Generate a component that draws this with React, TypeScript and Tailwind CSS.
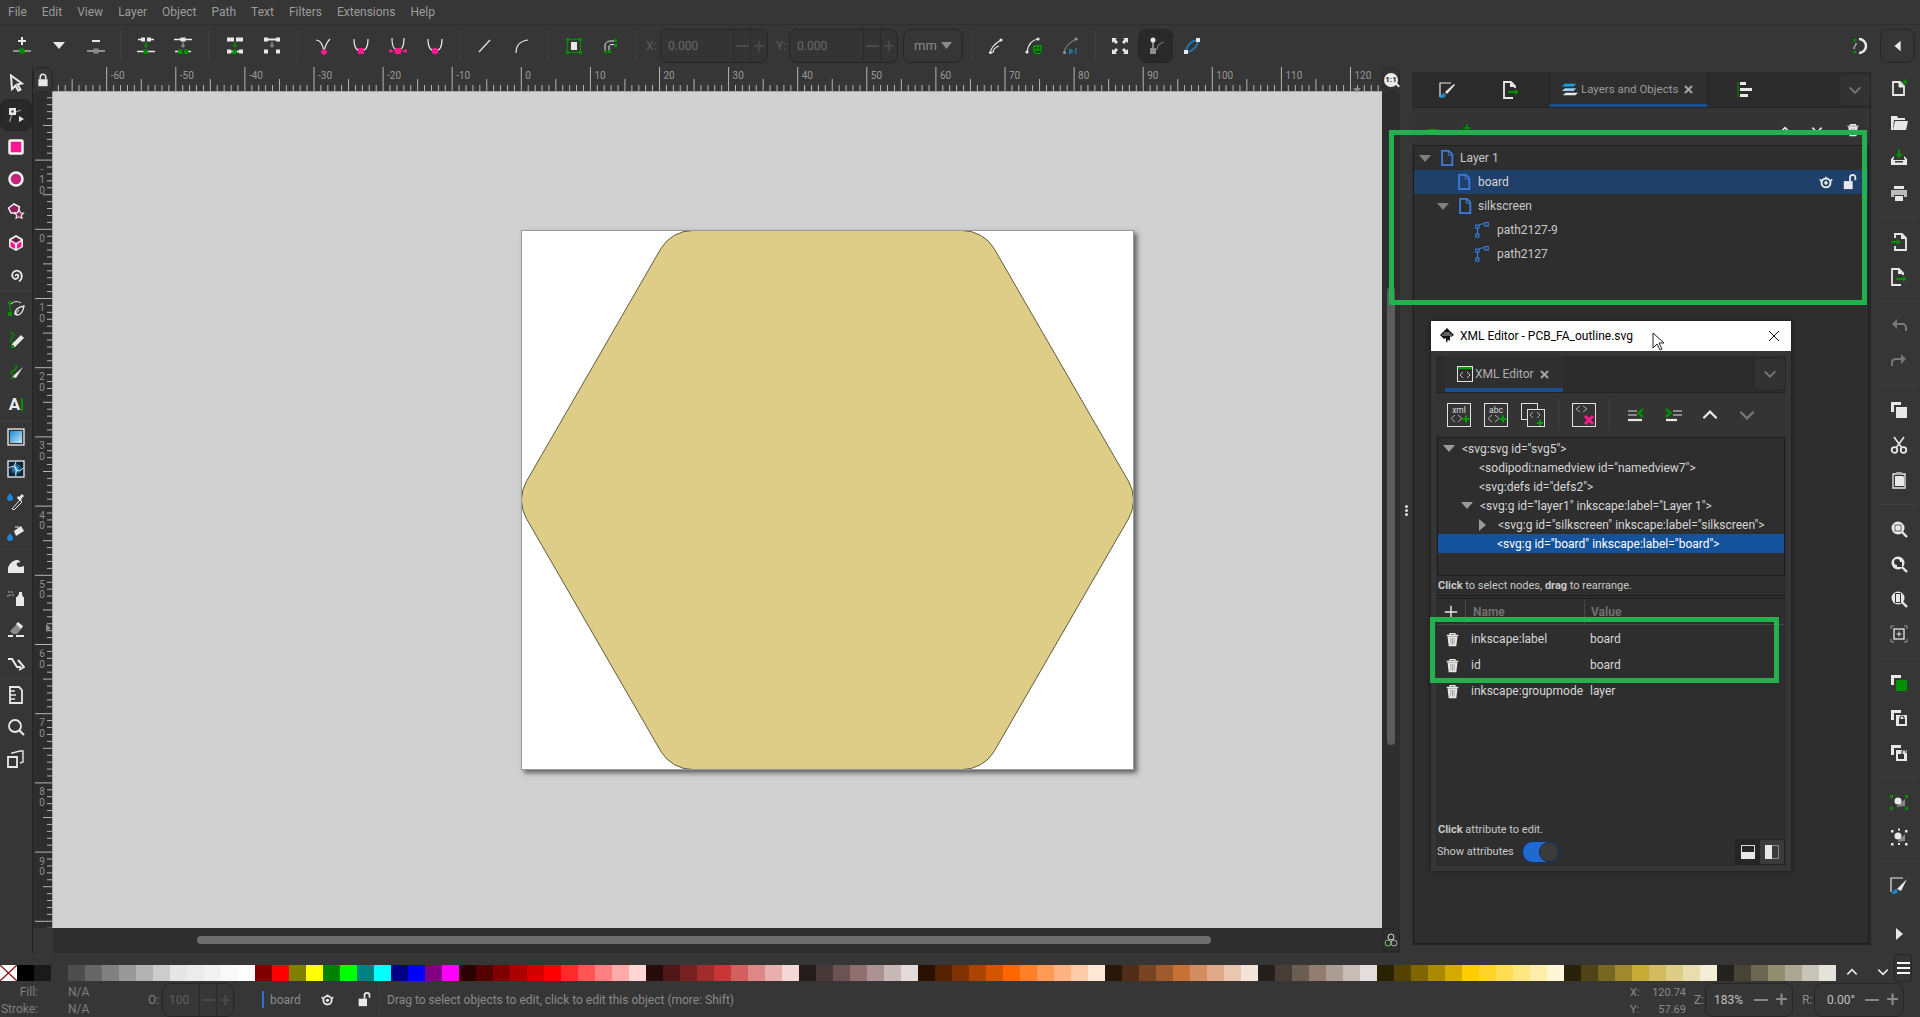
import React from 'react';

const W = '#e8e8e8';
const Gy = '#8a8a8a';
const G = '#008f00';
const P = '#ff1a8c';
const B = '#3b7de0';

// every icon lives on an 18x18 grid
const icons: Record<string, React.ReactNode> = {
  addNode: <><path d="M9 0v8M5 4h8" stroke={W} strokeWidth="2" /><path d="M0 14h18" stroke={W} /><rect x="6.5" y="11.5" width="5" height="5" fill={G} /></>,
  tri: <path d="M3 5h12l-6 7z" fill={W} />,
  delNode: <><path d="M5 4h8" stroke={W} strokeWidth="2" /><path d="M0 14h18" stroke={W} /><rect x="6.5" y="11.5" width="5" height="5" fill={Gy} /></>,
  join: <><path d="M1 2.5h5M12 2.5h5M0 14.5h18" stroke={W} strokeWidth="1.4" /><rect x="4" y="0.5" width="4" height="4" fill={W} /><rect x="10" y="0.5" width="4" height="4" fill={W} /><path d="M9 5v3" stroke={G} strokeWidth="1.5" /><path d="M6.5 8h5L9 11z" fill={G} /><rect x="6.5" y="12.5" width="4.5" height="4.5" fill={G} /></>,
  breakN: <><path d="M0 2.5h18M1 14.5h4M13 14.5h4" stroke={W} strokeWidth="1.4" /><rect x="6.5" y="0.5" width="5" height="4" fill={W} /><path d="M9 5v3" stroke={Gy} strokeWidth="1.5" /><path d="M6.5 8h5L9 11z" fill={Gy} /><rect x="4" y="12.5" width="4.5" height="4.5" fill={G} /><rect x="10" y="12.5" width="4.5" height="4.5" fill={G} /></>,
  joinSeg: <><rect x="1" y="0.5" width="7" height="4" fill={W} /><rect x="10" y="0.5" width="7" height="4" fill={W} /><path d="M9 5v3" stroke={G} strokeWidth="1.5" /><path d="M6.5 8h5L9 11z" fill={G} /><path d="M1 14.5h16" stroke={W} strokeWidth="2" /><rect x="6.5" y="12.5" width="4.5" height="4.5" fill={G} /><rect x="1" y="12.5" width="4" height="4" fill={W} /><rect x="13" y="12.5" width="4" height="4" fill={W} /></>,
  delSeg: <><rect x="1" y="0.5" width="4" height="4" fill={W} /><rect x="13" y="0.5" width="4" height="4" fill={W} /><path d="M3 2.5h12" stroke={W} strokeWidth="2" /><path d="M9 5v3" stroke={Gy} strokeWidth="1.5" /><path d="M6.5 8h5L9 11z" fill={Gy} /><rect x="1" y="12.5" width="4" height="4" fill={W} /><rect x="13" y="12.5" width="4" height="4" fill={W} /></>,
  cusp: <><path d="M1 3c5 0 7 5 8 12 1-6 3-10 6-13" stroke={W} strokeWidth="1.2" fill="none" /><rect x="6.5" y="12.5" width="5" height="5" transform="rotate(45 9 15)" fill={P} /></>,
  smooth: <><path d="M2 2c0 9 3 12 7 12s7-3 7-12" stroke={W} strokeWidth="1.2" fill="none" /><rect x="6" y="11" width="6" height="6" fill={P} /></>,
  symm: <><path d="M3 1c0 9 2 12 6 12s6-3 6-12" stroke={W} strokeWidth="1.2" fill="none" /><path d="M1 14h16" stroke={P} strokeWidth="1" /><rect x="6" y="11" width="6" height="6" fill={P} /><rect x="0" y="12.5" width="3" height="3" fill={P} /><rect x="15" y="12.5" width="3" height="3" fill={P} /></>,
  auto: <><path d="M2 2c0 9 3 12 7 12s7-3 7-12" stroke={W} strokeWidth="1.2" fill="none" /><circle cx="9" cy="14" r="3.2" fill={P} /></>,
  line: <path d="M3 15L14 3" stroke={W} strokeWidth="1.2" />,
  curve: <path d="M3 16C3 9 7 4 15 3" stroke={W} strokeWidth="1.2" fill="none" />,
  objPath: <><rect x="2.5" y="2.5" width="13" height="13" stroke={G} strokeWidth="1.2" fill="none" /><rect x="1" y="1" width="3" height="3" fill={G} /><rect x="14" y="1" width="3" height="3" fill={G} /><rect x="1" y="14" width="3" height="3" fill={G} /><rect x="14" y="14" width="3" height="3" fill={G} /><rect x="6" y="5" width="6" height="8" fill={W} /></>,
  strokePath: <><path d="M3 14V9c0-3 2-5 6-5h5M7 14V9.500c0-1 1-2 3-2h4" stroke={W} fill="none" /><rect x="12" y="2" width="3" height="3" fill={G} /><rect x="12" y="7" width="3" height="3" fill={G} /><rect x="2" y="13" width="3" height="3" fill={G} /><rect x="6" y="13" width="3" height="3" fill={G} /></>,
  flip1: <><path d="M2 16C3 10 8 6 13 3M5 16c0-4 3-6 6-7" stroke={W} strokeWidth="1.2" fill="none" /><circle cx="13" cy="3" r="1.6" fill={W} /><circle cx="2.500" cy="15.500" r="1.6" fill={W} /></>,
  flip2: <><path d="M2 15C3 8 7 3 13 2" stroke={W} strokeWidth="1.2" fill="none" /><circle cx="13" cy="2" r="1.6" fill={W} /><circle cx="2" cy="15" r="1.6" fill={W} /><path d="M8 8h9v5c0 3-2 4.500-4.500 4.500S8 16 8 13z" fill={G} /><rect x="10" y="10" width="1.500" height="1.500" fill="#111" /><rect x="14" y="10" width="1.500" height="1.500" fill="#111" /><path d="M10 14h6c-1 2-5 2-6 0z" fill="#111" /></>,
  flip3: <><path d="M2 16C3 9 8 5 14 2" stroke="#6a8090" strokeWidth="1.2" fill="none" /><circle cx="14" cy="2" r="1.6" fill="#8a97a2" /><circle cx="2.500" cy="15.500" r="1.6" fill="#8a97a2" /><path d="M7 11l5 3.500L7 18z" fill="#2f6f9a" /><path d="M13 11v6h1.500v-6z" fill="#2f6f9a" /></>,
  fit: <path d="M1 1h5l-1.500 1.500L7 5 5 7 2.500 4.500 1 6zM17 1h-5l1.500 1.500L11 5l2 2 2.500-2.500L17 6zM1 17h5l-1.500-1.500L7 13l-2-2-2.500 2.500L1 12zM17 17h-5l1.500-1.500L11 13l2-2 2.500 2.500L17 12z" fill={W} />,
  handles: <><path d="M6 3v8" stroke={W} /><circle cx="6" cy="3" r="2.500" fill={W} /><rect x="3" y="11" width="6" height="6" fill="#8d8d8d" /><path d="M10 13c0-4 3-7 7-8" stroke="#777" strokeWidth="1.2" fill="none" /></>,
  outline: <><path d="M3 15c0-6 6-12 12-12" stroke="#1b87d4" strokeWidth="1.5" fill="none" /><path d="M3 15c6 0 12-6 12-12" stroke="#1b87d4" strokeWidth="1.5" fill="none" /><rect x="1" y="13" width="4" height="4" fill={W} /><rect x="13" y="1" width="4" height="4" fill={W} /></>,
  snap: <><path d="M7 2a7 7 0 0 1 0 14" stroke={W} strokeWidth="2.500" fill="none" /><circle cx="3" cy="3" r="1.500" fill={G} /><circle cx="3" cy="15" r="1.500" fill={G} /><path d="M3 7h2M2 9h2M3 11h-2" stroke={W} /></>,
  back: <path d="M12 3v12L5 9z" fill={W} />,
  forward: <path d="M6 3v12l7-6z" fill={W} />,

  select: <path d="M4 1.500l11 8-4.500 1 3 5-2.200 1.200-2.800-5L5 15z" stroke={W} strokeWidth="2" fill="#363636" />,
  nodeT: <><path d="M3 16c0-6 3-10 11-12" stroke="#9a9a9a" strokeWidth="1.2" fill="none" /><rect x="2" y="2" width="7" height="7" fill={W} /><rect x="4.500" y="4.500" width="2" height="2" fill="#222" /><path d="M12 10v6l5-3z" fill={W} /></>,
  rectT: <rect x="2.500" y="2.500" width="13" height="13" rx="1" fill="#ff1493" stroke="#f4f4f4" strokeWidth="2.500" />,
  circleT: <circle cx="9" cy="9" r="6.500" fill="#c4237b" stroke="#f4f4f4" strokeWidth="2.500" />,
  starT: <><path d="M1.500 6L7 2l5.500 3L11 11H4z" fill="#8c1f5e" stroke="#eee" strokeWidth="1.500" /><path d="M12 8l1.500 2.800 3 .4-2.200 2 .6 3L12 14.800 9.100 16.200l.6-3-2.200-2 3-.4z" fill="#8c1f5e" stroke="#eee" strokeWidth="1.200" /></>,
  cube: <><path d="M9 1l7 4v8l-7 4-7-4V5z" fill="#f4f4f4" /><path d="M9 3l5 3-5 3-5-3z" fill="#6b1c4b" /><path d="M3.500 7.500L8 10v5l-4.500-2.500z" fill="#ff1493" /><path d="M14.500 7.500L10 10v5l4.500-2.500z" fill="#ff1493" /></>,
  spiral: <path d="M9 10c-1-1 1-2 2-1s0 4-2.500 4-4-3-3-5.500S10 3.500 13 6s2 8-1 9.500" stroke={W} strokeWidth="1.800" fill="none" />,
  pen: <><path d="M3 5v9" stroke={G} strokeWidth="1.200" /><circle cx="3" cy="4" r="2" fill={G} /><rect x="1" y="13" width="4" height="4" fill={G} /><path d="M4 5c3-3 7-3 10-1" stroke={W} fill="none" /><path d="M8 15c0-4 3-7 9-8-1 6-3 9-7 9z" stroke={W} strokeWidth="1.400" fill="#363636" /><path d="M8 16l4-5" stroke={W} /></>,
  pencil: <><path d="M3 2c4-1 5 2 3 4S2 9 5 11c1 .5 2 .5 3-.5" stroke={G} strokeWidth="1.300" fill="none" /><path d="M5 13l9-9 3 3-9 9-4 1z" fill={W} /><rect x="4" y="14" width="3" height="3" fill={G} /></>,
  callig: <><path d="M8 2C11 4 9 7 6 8s-2 3 0 4" stroke={G} strokeWidth="1.500" fill="none" /><path d="M5 14L16 4l-7 11z" fill={W} /><path d="M2 17l4-4 1 2z" fill={G} /></>,
  grad: <><rect x="1" y="1" width="16" height="16" fill="none" stroke="#f0f0f0" strokeWidth="1.300" /><rect x="3" y="3" width="12" height="12" fill="url(#g1)" /></>,
  mesh: <><rect x="1" y="1" width="16" height="16" fill="#123" stroke="#f0f0f0" strokeWidth="1.300" /><circle cx="9" cy="9" r="6" fill="url(#g2)" /><path d="M2 8c4-3 6-1 7 1s4 3 7-1M9 2c-2 3-1 5 0 7s-1 5 0 7" stroke="#f4f4f4" fill="none" /></>,
  dropper: <><path d="M3 1c2 3 3 4 3 5.500S5 9 3 9s-3-1-3-2.500S1 4 3 1z" fill="#1b87d4" /><path d="M5 17l8-9 2 2-8 8z" fill="#333" stroke={W} /><path d="M12 5l3-3 2 2-3 3 1 1-2 1-3-3 1-2z" fill={W} /></>,
  bucket: <><path d="M7 7l7-5 3 5-8 5z" fill={W} /><path d="M8 3l4 0" stroke={W} /><path d="M3 9c2 3 3 4 3 5.500S5 17 3 17s-3-1-3-2.500S1 12 3 9z" fill="#1b87d4" /></>,
  tweak: <path d="M1 16v-5c1-4 5-8 9-8 2 0 3 1 3 2s-2 0-3 1c-1 2 1 4 3 4s3-1 4-1v7z" fill={W} />,
  spray: <><rect x="9" y="8" width="8" height="9" fill={W} /><path d="M10 8l2-3h3l1 3zM12 3h3v2h-3z" fill={W} /><g fill="#8a8a8a"><circle cx="2" cy="3" r="1" /><circle cx="5" cy="3" r="1" /><circle cx="3" cy="6" r="1" /><circle cx="6" cy="6" r="1" /><circle cx="1" cy="7" r="1" /></g></>,
  eraser: <><path d="M3 10l7-7 5 4-5 6-4 0z" fill="#8a8a8a" /><path d="M9 3l2-2 5 4-2 3z" fill={W} /><path d="M1 15h5M9 15h8" stroke={W} strokeWidth="1.800" /></>,
  connector: <path d="M1 6h4l5 8h4M11 7l6 7-5 3" stroke={W} strokeWidth="2" fill="none" />,
  pagesT: <><path d="M3 1h9l3 3v13H3z" fill="none" stroke={W} strokeWidth="1.800" /><path d="M3 5h5M3 9h6M3 13h5" stroke={W} strokeWidth="1.500" /></>,
  zoomT: <><circle cx="8" cy="8" r="6" fill="none" stroke={W} strokeWidth="1.800" /><path d="M12 12l5 5" stroke={W} strokeWidth="2.200" /></>,
  pages: <><path d="M1 7h9v10H1z" fill="none" stroke={W} strokeWidth="1.800" /><path d="M5 4V3l8-2h3v11l-3 1" fill="none" stroke={W} strokeWidth="1.400" /></>,

  fileNew: <><path d="M3 3h7l4 4v9H3z" fill="none" stroke={W} strokeWidth="1.800" /><path d="M9 3v5h5" stroke={W} fill={W} /><path d="M15 0l1 2 2 .3-1.500 1.500.4 2-1.900-1-1.900 1 .4-2L12 2.300l2-.3z" fill={G} /></>,
  open: <><path d="M1 2h6l1 2h7v2H4l-1 10H1z" fill={W} /><path d="M5 7h13l-2 9H3z" fill={W} /></>,
  save: <><path d="M9 0v6" stroke={G} strokeWidth="2" /><path d="M5 5h8l-4 4z" fill={G} /><path d="M1 10l3-3v2l-1 2h12l-1-2V7l3 3v6H1z" fill={W} /><path d="M5 12h8v1.500H5z" fill="#363636" /></>,
  print: <><path d="M4 2h10v3H4z" fill={W} /><path d="M1 6h16v7h-3v-2H4v2H1z" fill="#bbb" /><path d="M5 12h8v5H5z" fill={W} /></>,
  importF: <><path d="M5 5V1h7l4 4v12H5v-4" fill="none" stroke={W} strokeWidth="1.800" /><path d="M11 1v5h5" fill={W} /><path d="M1 9h7" stroke={G} strokeWidth="2" /><path d="M7 6l4 3-4 3z" fill={G} /></>,
  exportF: <><path d="M11 17H2V1h7l4 4v2" fill="none" stroke={W} strokeWidth="1.800" /><path d="M8 1v5h5" fill={W} /><path d="M6 11h8" stroke={G} strokeWidth="2" /><path d="M13 8l4 3-4 3z" fill={G} /></>,
  undo: <><path d="M4 7h8c3 0 4 2 4 4v3" stroke="#777" strokeWidth="2" fill="none" /><path d="M7 2L2 7l5 5z" fill="#777" /></>,
  redo: <><path d="M14 7H6C3 7 2 9 2 11v3" stroke="#777" strokeWidth="2" fill="none" /><path d="M11 2l5 5-5 5z" fill="#777" /></>,
  copy: <><path d="M1 1h10v3H4v7H1z" fill={W} /><path d="M6 6h11v11H6z" fill={W} /></>,
  cut: <><path d="M4 1l8 11M14 1L6 12" stroke={W} strokeWidth="1.600" /><circle cx="4.500" cy="14" r="2.800" fill="none" stroke={W} strokeWidth="1.800" /><circle cx="13.500" cy="14" r="2.800" fill="none" stroke={W} strokeWidth="1.800" /></>,
  paste: <><path d="M3 3h12v14H3z" fill="none" stroke={W} strokeWidth="1.300" /><path d="M6 1h6v3H6z" fill="#aaa" /><path d="M5 5h8l1 1v9H5z" fill={W} /></>,
  zoomSel: <><circle cx="8" cy="8" r="6.500" fill={W} /><rect x="4.500" y="4.500" width="7" height="7" fill="#666" /><rect x="5.500" y="5.500" width="5" height="5" fill={W} /><path d="M12 12l5 5" stroke={W} strokeWidth="2.400" /></>,
  zoomDraw: <><circle cx="8" cy="8" r="6.500" fill={W} /><circle cx="7" cy="7" r="3" fill="#333" /><rect x="7" y="7" width="5" height="5" fill="#333" /><path d="M12 12l5 5" stroke={W} strokeWidth="2.400" /></>,
  zoomPage: <><circle cx="8" cy="8" r="6.500" fill={W} /><rect x="5" y="3" width="6" height="10" fill="#333" /><rect x="6" y="4" width="4" height="8" fill={W} /><path d="M12 12l5 5" stroke={W} strokeWidth="2.400" /></>,
  zoomCenter: <><path d="M1 4V1h3M14 1h3v3M17 14v3h-3M4 17H1v-3" stroke="#999" fill="none" /><rect x="4" y="4" width="10" height="10" fill="none" stroke={W} strokeWidth="1.300" /><path d="M9 6.500v5M6.500 9h5" stroke={W} /></>,
  dup: <><path d="M1 1h10v3H4v7H1z" fill={W} /><path d="M6 6h11v11H6z" fill={G} /></>,
  lockD: <><path d="M1 1h10v3H4v7H1z" fill={W} /><path d="M6 6h11v11H6z" fill={W} /><path d="M9 10h6v5H9z" fill="#333" /><path d="M10 10V9a2 2 0 0 1 4 0v1" stroke="#333" strokeWidth="1.200" fill="none" /></>,
  unlockD: <><path d="M1 1h10v3H4v7H1z" fill={W} /><path d="M6 6h11v11H6z" fill={W} /><path d="M8 10h6v5H8z" fill="#333" /><path d="M12 10V8a2 2 0 0 1 4 0v1" stroke="#333" strokeWidth="1.200" fill="none" /></>,
  sel1: <><rect x="0" y="2" width="3" height="3" fill={G} /><rect x="15" y="2" width="3" height="3" fill={G} /><rect x="0" y="14" width="3" height="3" fill={G} /><rect x="15" y="14" width="3" height="3" fill={G} /><path d="M6 14l9-1V6z" fill="#888" /><circle cx="8" cy="8" r="3.500" fill={W} /></>,
  sel2: <><rect x="1" y="2" width="2.500" height="2.500" fill={W} /><rect x="15" y="2" width="2.500" height="2.500" fill={W} /><rect x="1" y="15" width="2.500" height="2.500" fill={W} /><rect x="15" y="15" width="2.500" height="2.500" fill={W} /><rect x="8" y="0.500" width="2" height="2" fill={W} /><rect x="8" y="15" width="2" height="2" fill={W} /><path d="M7 14l8-1V6z" fill="#888" /><circle cx="8" cy="8" r="3.500" fill={W} /></>,
  fillStroke: <><path d="M13 1H1v14" fill="none" stroke={W} strokeWidth="1.200" /><path d="M7 12L17 2l-6 12z" fill={W} /><path d="M2 17c0-3 2-4 4-5l2 2c-1 3-3 3-6 3z" fill="#1b87d4" /></>,

  fsTab: <><path d="M13 2H2v14" fill="none" stroke={W} strokeWidth="1.200" /><path d="M7 11L16 3l1 1-8 9z" fill={W} /><path d="M2 17c0-3 2-4 4-5l2 2c-1 3-3 3-6 3z" fill="#1b87d4" /></>,
  layersTab: <><path d="M3 2h13l-3 3H0z" fill="#1da0e0" /><path d="M3 7h13l-3 3H0z" fill="#9acbe9" /><path d="M4 12h14l-3 3H1z" fill={W} /></>,
  alignTab: <><path d="M1 1v16" stroke={G} /><path d="M3 1h6v3H3zM3 7h12v3H3zM3 13h8v3H3z" fill={W} /></>,
  chevDown: <path d="M3 6l6 6 6-6" stroke="#777" strokeWidth="2" fill="none" />,
  chevUp: <path d="M3 12l6-6 6 6" stroke={W} strokeWidth="2" fill="none" />,
  chevDownW: <path d="M3 6l6 6 6-6" stroke={W} strokeWidth="2" fill="none" />,
  doc: <><path d="M3.500 1h7.500l4 4v12H3.500z" fill="none" stroke={B} strokeWidth="2" /><path d="M10.500 1v5h4.500" fill="none" stroke={B} /></>,
  pathN: <><path d="M4 14V7c0-3 3-5 8-5" stroke={B} fill="none" strokeWidth="1.300" /><rect x="2" y="3.500" width="3.500" height="3.500" fill="#2e2e2e" stroke={B} strokeWidth="1.300" /><rect x="12" y="0.500" width="4" height="4" fill="none" stroke={B} strokeWidth="1.300" /><rect x="2" y="13.500" width="3.500" height="3.500" fill="none" stroke={B} strokeWidth="1.300" /></>,
  eye: <><circle cx="9" cy="10" r="5" fill="none" stroke={W} strokeWidth="2.200" /><circle cx="9" cy="10" r="2" fill={W} /><path d="M2 6l2 2M16 6l-2 2M9 3v3" stroke={W} strokeWidth="1.800" /></>,
  unlock: <><rect x="2" y="8" width="10" height="9" fill={W} /><path d="M9 8V4a3 3 0 0 1 6 0v3" fill="none" stroke={W} strokeWidth="2" /></>,
  lock: <><rect x="3" y="8" width="12" height="9" fill={W} /><path d="M5.500 8V5a3.500 3.500 0 0 1 7 0v3" fill="none" stroke={W} strokeWidth="2" /></>,
  trash: <><path d="M2 4h14M6 4V2h6v2" stroke={W} strokeWidth="1.500" fill="none" /><path d="M3 5l1.500 12h9L15 5z" fill={W} /><path d="M7 7v8M9 7v8M11 7v8" stroke="#999" /></>,
  plus: <path d="M9 2v14M2 9h14" stroke={W} strokeWidth="1.600" />,
  minusPlusGreen: <path d="M1 10l5-4h10l-5 4z" fill={G} />,
  plusGreen: <path d="M9 4v10M4 9h10" stroke={G} strokeWidth="2" />,
  outdent: <><path d="M1 5h9M1 9h9" stroke="#888" strokeWidth="2.200" /><path d="M1 14h14" stroke={W} strokeWidth="2.200" /><path d="M16 3L11.500 7l4.500 4" stroke={G} strokeWidth="2.400" fill="none" /></>,
  indent: <><path d="M9 5h9M9 9h9" stroke="#888" strokeWidth="2.200" /><path d="M2 14h11" stroke={W} strokeWidth="2.200" /><path d="M2 3l4.500 4L2 11" stroke={G} strokeWidth="2.400" fill="none" /></>,
};

function Ic({ n, s = 18 }: { n: string; s?: number }) {
  return (
    <svg width={s} height={s} viewBox="0 0 18 18" className="shrink-0">
      {icons[n]}
    </svg>
  );
}

function Btn({ n }: { n: string }) {
  return (
    <div className="w-[37px] h-full flex items-center justify-center shrink-0">
      <Ic n={n} />
    </div>
  );
}

function Field({ value, className }: { value: string; className: string }) {
  return (
    <div className={"h-[34px] flex items-center border border-[#262626] rounded-lg bg-[#343434] text-[#6a6a6a] " + className}>
      <span className="flex-1 pl-[7px]">{value}</span>
      <span className="w-[17px] h-full border-l border-[#2a2a2a] flex items-center justify-center"><span className="w-[13px] h-[2px] bg-[#4a4a4a]" /></span>
      <span className="w-[17px] h-full border-l border-[#2a2a2a] flex items-center justify-center text-[#4a4a4a] text-[20px] leading-none">+</span>
    </div>
  );
}

function TopToolbar() {
  return (
    <div className="h-[42px] flex items-center shrink-0 pl-[3px] pr-[5px]">
      <Btn n="addNode" /><Btn n="tri" /><Btn n="delNode" />
      <div className="w-px h-[32px] bg-[#3f3f3f] mx-[6px]" />
      <Btn n="join" /><Btn n="breakN" />
      <div className="w-px h-[32px] bg-[#3f3f3f] mx-[7px]" />
      <Btn n="joinSeg" /><Btn n="delSeg" />
      <div className="w-px h-[32px] bg-[#3f3f3f] mx-[7px]" />
      <Btn n="cusp" /><Btn n="smooth" /><Btn n="symm" /><Btn n="auto" />
      <div className="w-px h-[32px] bg-[#3f3f3f] mx-[6px]" />
      <Btn n="line" /><Btn n="curve" />
      <div className="w-px h-[32px] bg-[#3f3f3f] mx-[7px]" />
      <Btn n="objPath" /><Btn n="strokePath" />
      <div className="w-px h-[32px] bg-[#3f3f3f] mx-[6px]" />
      <span className="w-[18px] text-[#5f5f5f] text-[12px] pl-[4px]">X:</span>
      <Field value="0.000" className="w-[108px] text-[12px]" />
      <span className="w-[21px] text-[#5f5f5f] text-[12px] pl-[8px]">Y:</span>
      <Field value="0.000" className="w-[109px] text-[12px]" />
      <div className="ml-[5px] w-[60px] h-[34px] border border-[#262626] rounded-lg flex items-center justify-center gap-[4px] text-[#8a8a8a] text-[13px]">
        mm
        <svg width="11" height="8" viewBox="0 0 11 8"><path d="M0 0h11L5.500 7z" fill="#8a8a8a" /></svg>
      </div>
      <div className="w-px h-[32px] bg-[#3f3f3f] ml-[8px] mr-[6px]" />
      <Btn n="flip1" /><Btn n="flip2" /><Btn n="flip3" />
      <div className="w-px h-[32px] bg-[#3f3f3f] ml-[6px] mr-[5px]" />
      <Btn n="fit" />
      <div className="w-[35px] h-[34px] rounded-lg bg-[#292929] border border-[#262626] flex items-center justify-center"><Ic n="handles" /></div>
      <Btn n="outline" />
      <div className="ml-auto mr-[10px]"><Ic n="snap" /></div>
      <div className="w-[35px] h-[34px] rounded-lg border border-[#262626] flex items-center justify-center"><Ic n="back" s={16} /></div>
    </div>
  );
}

const leftTools = ['select', 'nodeT', 'rectT', 'circleT', 'starT', 'cube', 'spiral', '-', 'pen', 'pencil', 'callig', 'text', '-', 'grad', 'mesh', 'dropper', 'bucket', '-', 'tweak', 'spray', 'eraser', 'connector', '-', 'pagesT', 'zoomT', 'pages'];

function LeftTools() {
  return (
    <div className="w-[33px] shrink-0 border-r border-[#232323] flex flex-col">
      {leftTools.map((t, i) => {
        if (t === '-') return <div key={i} className="h-px bg-[#3f3f3f] shrink-0" />;
        return (
          <div key={i} className={"h-[32px] shrink-0 flex items-center justify-center " + (t === 'nodeT' ? 'bg-[#292929] rounded-lg border border-[#262626]' : '')}>
            {t === 'text' ? (
              <span className="flex items-center gap-[1px] text-[#ececec] font-bold text-[17px] leading-none">
                A<span className="w-[2px] h-[13px] bg-[#008f00]" />
              </span>
            ) : <Ic n={t} />}
          </div>
        );
      })}
    </div>
  );
}

const X_PER_MM = 6.91;

function TopRuler() {
  const ticks = [];
  const x0 = 521.3 - 53;
  for (let mm = -67; mm <= 125; mm++) {
    const x = x0 + mm * X_PER_MM;
    const major = mm % 10 === 0;
    const half = mm % 5 === 0;
    ticks.push(<line key={mm} x1={x} x2={x} y1={major ? 0 : half ? 12 : 18} y2={25} stroke="#b5b5b5" strokeWidth="1" />);
    if (major) ticks.push(<text key={'t' + mm} x={x + 4} y={12} fontSize="10" fill="#999999">{mm}</text>);
  }
  return (
    <svg width="1329" height="25" className="shrink-0">
      {ticks}
      <path d="M0 24.500h1329" stroke="#a8a8a8" />
      <path d="M1300 21h8l-4 5z" fill="#8a8a8a" />
    </svg>
  );
}

function LeftRuler() {
  const items = [];
  const y0 = 229.3 - 92;
  for (let mm = -19; mm <= 102; mm++) {
    const y = y0 + mm * X_PER_MM + mm * 0.01;
    const major = mm % 10 === 0;
    const half = mm % 5 === 0;
    items.push(<line key={mm} y1={y} y2={y} x1={major ? 2 : half ? 10 : 14} x2={20} stroke="#b5b5b5" strokeWidth="1" />);
    // the 100 label would run past the end of the ruler
    if (major && mm < 100) {
      String(mm).split('').forEach((c, i) => {
        items.push(<text key={mm + 'd' + i} x={9} y={y + 12.5 + i * 10.5} fontSize="10" textAnchor="middle" fill="#8f8f8f">{c}</text>);
      });
    }
  }
  return (
    <svg width="20" height="836" className="shrink-0 bg-[#2d2d2d]">
      {items}
      <path d="M19.500 0v836" stroke="#a8a8a8" />
      <path d="M13 532v8l5-4z" fill="#8a8a8a" />
    </svg>
  );
}

function Canvas() {
  return (
    <div className="relative w-[1329px] h-[836px] bg-[#d1d1d1] shrink-0">
      <div className="absolute left-[468px] top-[138px] w-[613px] h-[540px] bg-white shadow-[3px_3px_5px_rgba(0,0,0,0.55)]">
        <svg width="613" height="540" viewBox="0 0 613 540" className="block">
          <path
            d="M171.600 0.500L441.400 0.500A37 37 0 0 1 472.900 18.200L607.800 251.800A37 37 0 0 1 607.800 288.200L472.900 521.800A37 37 0 0 1 441.400 539.500L171.600 539.500A37 37 0 0 1 140.100 521.800L5.200 288.200A37 37 0 0 1 5.200 251.800L140.100 18.200A37 37 0 0 1 171.600 0.500Z"
            fill="#decd87"
            stroke="#3d3a22"
            strokeWidth="0.800"
          />
          <rect x="0.500" y="0.500" width="612" height="539" fill="none" stroke="#9a9a9a" strokeWidth="1" />
        </svg>
      </div>
    </div>
  );
}

function CenterArea() {
  return (
    <div className="w-[1367px] shrink-0 flex flex-col">
      <div className="flex h-[25px] shrink-0">
        <div className="w-[20px] h-[25px] rounded-lg border border-[#262626] flex items-center justify-center"><Ic n="lock" s={14} /></div>
        <TopRuler />
        <div className="w-[18px] h-[25px] rounded-lg border border-[#262626] bg-[#333] flex items-center justify-center">
          <div className="relative w-[14px] h-[14px] rounded-full bg-[#ececec] text-[8px] font-bold text-[#222] flex items-center justify-center leading-none">
            1:1
            <span className="absolute left-[11px] top-[11px] w-[5px] h-[2px] bg-[#ececec] rotate-45" />
          </div>
        </div>
      </div>
      <div className="flex">
        <LeftRuler />
        <Canvas />
        <div className="w-[18px] h-[836px] bg-[#2e2e2e] flex justify-center">
          <div className="w-[8px] h-[458px] mt-[195px] rounded-full bg-[#5c5c5c]" />
        </div>
      </div>
      <div className="h-[25px] shrink-0 flex bg-[#2e2e2e] ml-[20px]">
        <div className="ml-[144px] mt-[8px] w-[1014px] h-[8px] rounded-full bg-[#6e6e6e]" />
        <div className="ml-auto w-[18px] h-[24px] rounded border border-[#262626] flex items-center justify-center">
          <svg width="14" height="14" viewBox="0 0 14 14">
            <circle cx="7" cy="4" r="3" fill="none" stroke="#ddd" />
            <circle cx="4" cy="10" r="3" fill="none" stroke="#6fbf6f" />
            <circle cx="10" cy="10" r="3" fill="none" stroke="#aaa" />
          </svg>
        </div>
      </div>
    </div>
  );
}

function Handle() {
  return (
    <div className="w-[12px] shrink-0 flex flex-col items-center gap-[1px] pt-[438px]">
      <span className="w-[3px] h-[3px] bg-[#ddd] rounded-full" />
      <span className="w-[3px] h-[3px] bg-[#ddd] rounded-full" />
      <span className="w-[3px] h-[3px] bg-[#ddd] rounded-full" />
    </div>
  );
}

function RightPanel() {
  return (
    <div className="w-[459px] shrink-0 pt-[5px] pb-[8px] flex flex-col">
      <div className="flex-1 bg-[#2e2e2e] border-r border-b border-[#232323] flex flex-col">
        <div className="h-[36px] shrink-0 flex items-stretch border-b border-[#232323] bg-[#2b2b2b]">
          <div className="w-[137px] flex items-center">
            <div className="w-[70px] flex justify-center"><Ic n="fsTab" /></div>
            <div className="w-[58px] flex justify-center"><Ic n="exportF" /></div>
          </div>
          <div className="w-[159px] bg-[#2f2f2f] border-x border-[#232323] border-b-[3px] border-b-[#1a4f8f] flex items-center pl-[12px] pt-[3px] gap-[3px]">
            <Ic n="layersTab" s={16} />
            <span className="text-[#9a9a9a] text-[11.5px] whitespace-nowrap">Layers and Objects</span>
            <span className="ml-[3px] text-[#aaa]"><svg width="9" height="9" viewBox="0 0 9 9"><path d="M1 1l7 7M8 1L1 8" stroke="#a5a5a5" strokeWidth="2" /></svg></span>
          </div>
          <div className="w-[36px] ml-[29px] self-center"><Ic n="alignTab" /></div>
          <div className="ml-auto w-[30px] h-[30px] self-center bg-[#323232] rounded flex items-center justify-center"><Ic n="chevDown" s={16} /></div>
        </div>
        <div className="h-[37px] shrink-0 bg-[#343434] flex items-center relative overflow-hidden">
          <div className="ml-[10px] mt-[10px]"><Ic n="minusPlusGreen" /></div>
          <div className="ml-[20px] mt-[2px]"><Ic n="plusGreen" s={14} /></div>
          <div className="ml-auto mr-[18px] mt-[6px]"><Ic n="chevUp" s={14} /></div>
          <div className="mr-[22px] mt-[6px]"><Ic n="chevDownW" s={14} /></div>
          <div className="mr-[10px] mt-[6px]"><Ic n="trash" s={14} /></div>
        </div>
        <div className="flex-1 border border-[#1d1d1d] mx-[1px] text-[12px] text-[#c8c8c8]">
          <Row pl="pl-[5px]" arrow icon="doc" text="Layer 1" gap="gap-[5px]" />
          <div className="h-[24px] flex items-center bg-[#1f4068] pl-[42px] gap-[6px] text-[#d6d6d6]">
            <Ic n="doc" s={16} /><span>board</span>
            <div className="ml-auto mr-[10px] flex items-center gap-[8px]"><Ic n="eye" s={16} /><Ic n="unlock" s={16} /></div>
          </div>
          <Row pl="pl-[23px]" arrow icon="doc" text="silkscreen" gap="gap-[5px]" />
          <Row pl="pl-[60px]" icon="pathN" text="path2127-9" gap="gap-[7px]" />
          <Row pl="pl-[60px]" icon="pathN" text="path2127" gap="gap-[7px]" />
        </div>
      </div>
    </div>
  );
}

function Row({ pl, arrow, icon, text, gap }: { pl: string; arrow?: boolean; icon: string; text: string; gap: string }) {
  return (
    <div className={"h-[24px] flex items-center " + pl + " " + gap}>
      {arrow && <svg width="13" height="7" viewBox="0 0 13 7" className="mr-[2px]"><path d="M0 0h12L6 7z" fill="#7f7f7f" /></svg>}
      <Ic n={icon} s={16} />
      <span>{text}</span>
    </div>
  );
}

const rightTools = ['fileNew', 'open', 'save', 'print', '-', 'importF', 'exportF', '-', 'undo', 'redo', '-', 'copy', 'cut', 'paste', '-', 'zoomSel', 'zoomDraw', 'zoomPage', 'zoomCenter', '-', 'dup', 'lockD', 'unlockD', '-', 'sel1', 'sel2', '-', 'fillStroke', ' ', 'forward'];

function RightTools() {
  return (
    <div className="flex-1 flex flex-col pt-[3px] pl-[9px] pr-[2px]">
      {rightTools.map((t, i) => {
        if (t === '-') return <div key={i} className="h-[14px] shrink-0 flex items-center"><div className="w-full h-px bg-[#3f3f3f]" /></div>;
        if (t === ' ') return <div key={i} className="h-[13px] shrink-0" />;
        return (
          <div key={i} className="h-[35px] shrink-0 flex items-center justify-center">
            <Ic n={t} />
          </div>
        );
      })}
    </div>
  );
}

const swatches = [
  '', '#000000', '#1a1a1a', '#363636',
  '#4d4d4d', '#666666', '#808080', '#999999', '#b3b3b3', '#cccccc', '#e6e6e6', '#ececec', '#f2f2f2', '#f9f9f9', '#ffffff',
  '#800000', '#ff0000', '#808000', '#ffff00', '#008000', '#00ff00', '#008080', '#00ffff', '#000080', '#0000ff', '#800080', '#ff00ff',
  '#2b0000', '#550000', '#800000', '#aa0000', '#d40000', '#ff0000', '#ff2a2a', '#ff5555', '#ff8080', '#ffaaaa', '#ffd5d5',
  '#280b0b', '#501616', '#782121', '#a02c2c', '#c83737', '#d35f5f', '#de8787', '#e9afaf', '#f4d7d7',
  '#241c1c', '#483737', '#6c5353', '#916f6f', '#ac9393', '#c8b7b7', '#e3dbdb',
  '#2b1100', '#552200', '#803300', '#aa4400', '#d45500', '#ff6600', '#ff7f2a', '#ff9955', '#ffb380', '#ffccaa', '#ffe6d5',
  '#28170b', '#502d16', '#784421', '#a05a2c', '#c87137', '#d38d5f', '#deaa87', '#e9c6af', '#f4e3d7',
  '#241f1c', '#483e37', '#6c5d53', '#917c6f', '#ac9d93', '#c8beb7', '#e3dedb',
  '#2b2200', '#554400', '#806600', '#aa8800', '#d4aa00', '#ffcc00', '#ffd42a', '#ffdd55', '#ffe680', '#ffeeaa', '#fff6d5',
  '#28220b', '#504416', '#786721', '#a0892c', '#c8ab37', '#d3bc5f', '#decd87', '#e9ddaf', '#f4eed7',
  '#24221c', '#484537', '#6c6753', '#918f6f', '#aca793', '#c8c4b7', '#e3e2db',
];

function Palette() {
  return (
    <div className="h-[29px] shrink-0 flex">
      <div className="flex mt-[12px] h-[16px]">
        {swatches.map((c, i) =>
          i === 0 ? (
            <svg key={i} width="17" height="16" className="bg-white"><path d="M0 0l17 16M17 0L0 16" stroke="#8a1c1c" strokeWidth="1.300" /></svg>
          ) : (
            <div key={i} className="w-[17px] h-[16px]" style={{ backgroundColor: c }} />
          )
        )}
      </div>
      <div className="ml-[9px] mt-[12px]"><Ic n="chevUp" s={14} /></div>
      <div className="ml-[17px] mt-[12px]"><Ic n="chevDownW" s={14} /></div>
      <div className="ml-[4px] mt-[1px] w-[18px] h-[28px] rounded border border-[#262626] flex flex-col items-center justify-center gap-[3px]">
        <span className="w-[13px] h-[2px] bg-white" />
        <span className="w-[13px] h-[2px] bg-white" />
        <span className="w-[13px] h-[2px] bg-white" />
      </div>
    </div>
  );
}

function MiniField({ value, className, pl }: { value: string; className: string; pl: string }) {
  return (
    <div className={"h-[34px] flex items-center border border-[#262626] rounded-lg " + className}>
      <span className={"flex-1 whitespace-nowrap " + pl}>{value}</span>
      <span className="w-[21px] flex justify-center"><span className="w-[14px] h-[2px] bg-[#8a8a8a]" /></span>
      <span className="w-[21px] flex justify-center text-[#8a8a8a] text-[22px] leading-none">+</span>
    </div>
  );
}

function StatusBar() {
  return (
    <div className="h-[35px] shrink-0 flex items-center text-[12px] text-[#8a8a8a]">
      <div className="w-[148px] flex flex-col leading-[17px] text-[#7f7f7f] pt-[3px]">
        <div className="flex"><span className="w-[38px] text-right">Fill:</span><span className="ml-[30px]">N/A</span></div>
        <div className="flex"><span className="w-[38px] text-right">Stroke:</span><span className="ml-[30px]">N/A</span></div>
      </div>
      <span className="w-[14px] text-[#7f7f7f]">O:</span>
      <div className="w-[72px] h-[34px] flex items-center border border-[#262626] rounded-lg text-[#5f5f5f]">
        <span className="flex-1 pl-[6px]">100</span>
        <span className="w-[17px] h-full border-l border-[#2a2a2a] flex items-center justify-center"><span className="w-[13px] h-[2px] bg-[#4a4a4a]" /></span>
        <span className="w-[17px] h-full border-l border-[#2a2a2a] flex items-center justify-center text-[#4a4a4a] text-[20px] leading-none">+</span>
      </div>
      <span className="ml-[28px] w-[2px] h-[17px] bg-[#2f6fd6]" />
      <span className="ml-[6px] w-[50px]">board</span>
      <Ic n="eye" s={15} />
      <span className="ml-[22px]"><Ic n="unlock" s={15} /></span>
      <span className="ml-[7px] w-px h-[30px] bg-[#3f3f3f]" />
      <span className="ml-[7px] whitespace-nowrap">Drag to select objects to edit, click to edit this object (more: Shift)</span>
      <div className="ml-auto flex items-center text-[#8a8a8a] pr-[16px]">
        <div className="w-[56px] flex flex-col leading-[17px] text-[11px] pt-[2px]">
          <div className="flex justify-between"><span>X:</span><span>120.74</span></div>
          <div className="flex justify-between"><span>Y:</span><span>57.69</span></div>
        </div>
        <span className="w-[19px] text-right pr-[1px]">Z:</span>
        <MiniField value="183%" className="w-[88px] text-[#c0c0c0]" pl="pl-[8px]" />
        <span className="ml-[9px] w-[12px]">R:</span>
        <MiniField value="0.00°" className="w-[90px] text-[#c0c0c0]" pl="pl-[12px]" />
      </div>
    </div>
  );
}

const nodes: { pl: string; text: string; arrow?: 'down' | 'right'; sel?: boolean }[] = [
  { pl: 'pl-[5px]', text: '<svg:svg id="svg5">', arrow: 'down' },
  { pl: 'pl-[41px]', text: '<sodipodi:namedview id="namedview7">' },
  { pl: 'pl-[41px]', text: '<svg:defs id="defs2">' },
  { pl: 'pl-[23px]', text: '<svg:g id="layer1" inkscape:label="Layer 1">', arrow: 'down' },
  { pl: 'pl-[41px]', text: '<svg:g id="silkscreen" inkscape:label="silkscreen">', arrow: 'right' },
  { pl: 'pl-[59px]', text: '<svg:g id="board" inkscape:label="board">', sel: true },
];

function DlgIconBox({ label, del }: { label?: string; del?: boolean }) {
  return (
    <svg width="24" height="24" viewBox="0 0 24 24" className="shrink-0">
      <rect x="0.500" y="0.500" width="23" height="23" fill="none" stroke="#e2e2e2" />
      {label && <text x="12" y="9.500" textAnchor="middle" fontSize="8.500" fill="#dcdcdc">{label}</text>}
      <path d={label ? 'M8 12l-4 3.500 4 3.500M11 12l4 3.500-4 3.500' : 'M8 3l-4 3 4 3M11 3l4 3-4 3'} stroke="#a8a8a8" fill="none" />
      {del ? <path d="M13 13l8 8M21 13l-8 8" stroke="#ff1a8c" strokeWidth="3" /> : <path d="M19 12.500v7M15.500 16h7" stroke="#00a000" strokeWidth="2" />}
    </svg>
  );
}

function XmlDialog() {
  return (
    <div className="absolute left-[1431px] top-[321px] w-[360px] h-[550px] flex flex-col bg-[#363636] shadow-[0_0_6px_rgba(0,0,0,0.5)]">
      <div className="h-[30px] bg-white shrink-0 flex items-center pl-[8px] pr-[8px] text-[12px] text-black">
        <svg width="16" height="16" viewBox="0 0 16 16" className="mr-[5px]">
          <path d="M8 0l7 7-3 2-1-1v4l-1 1-1-2-1 4-1-2v-3L5 11 3 9 1 7z" fill="#111" />
          <path d="M3 7h10M5 5h6" stroke="#ddd" strokeWidth="0.800" />
        </svg>
        XML Editor - PCB_FA_outline.svg
        <svg width="12" height="12" viewBox="0 0 12 12" className="ml-auto mr-[3px]"><path d="M1 1l10 10M11 1L1 11" stroke="#111" /></svg>
      </div>
      <div className="flex-1 m-[5px] bg-[#2e2e2e] flex flex-col min-h-0 text-[12px] text-[#d6d6d6]">
        <div className="h-[37px] shrink-0 flex items-stretch border-b border-[#232323] bg-[#2b2b2b]">
          <div className="ml-[9px] w-[118px] bg-[#2f2f2f] border-b-[4px] border-[#1a4f8f] flex items-center pl-[12px] pt-[4px] gap-[2px] text-[#b0b0b0]">
            <svg width="16" height="16" viewBox="0 0 16 16" className="shrink-0">
              <rect x="0.500" y="0.500" width="15" height="15" fill="none" stroke="#e2e2e2" />
              <rect x="1" y="1" width="14" height="2" fill="#00a000" />
              <path d="M6 6l-3 3 3 3M10 6l3 3-3 3" stroke="#bbb" fill="none" />
            </svg>
            XML Editor
            <svg width="9" height="9" viewBox="0 0 9 9" className="ml-[4px]"><path d="M1 1l7 7M8 1L1 8" stroke="#a5a5a5" strokeWidth="2" /></svg>
          </div>
          <div className="ml-auto mr-[1px] w-[30px] h-[30px] self-center bg-[#323232] rounded flex items-center justify-center"><Ic n="chevDown" s={16} /></div>
        </div>
        <div className="h-[44px] shrink-0 bg-[#343434] flex items-center pl-[11px] text-[#ccc]">
          <DlgIconBox label="xml" />
          <div className="ml-[13px]"><DlgIconBox label="abc" /></div>
          <svg width="24" height="24" viewBox="0 0 24 24" className="ml-[13px] shrink-0">
            <rect x="0.500" y="0.500" width="16" height="16" fill="none" stroke="#e2e2e2" />
            <rect x="6.500" y="6.500" width="17" height="17" fill="#343434" stroke="#e2e2e2" />
            <path d="M12 9l-3 3 3 3M16 9l3 3-3 3" stroke="#a8a8a8" fill="none" />
            <path d="M19 17v6M16 20h6" stroke="#00a000" strokeWidth="2" />
          </svg>
          <div className="w-px h-[32px] bg-[#3f3f3f] ml-[13px]" />
          <div className="ml-[13px]"><DlgIconBox del /></div>
          <div className="w-px h-[32px] bg-[#3f3f3f] ml-[13px]" />
          <div className="w-[37px] ml-[7px] flex justify-center"><Ic n="outdent" /></div>
          <div className="w-[37px] flex justify-center"><Ic n="indent" /></div>
          <div className="w-[37px] flex justify-center"><Ic n="chevUp" s={20} /></div>
          <div className="w-[37px] flex justify-center"><Ic n="chevDown" s={20} /></div>
        </div>
        <div className="h-[139px] shrink-0 border border-[#1d1d1d] mx-[1px] pt-[1px]">
          {nodes.map((n) => (
            <div key={n.text} className={"h-[19px] flex items-center whitespace-nowrap relative " + n.pl + (n.sel ? ' bg-[#15529c] text-white' : '')}>
              {n.arrow === 'down' && <svg width="13" height="7" viewBox="0 0 13 7" className="mr-[6px] shrink-0"><path d="M0 0h12L6 7z" fill="#9a9a9a" /></svg>}
              {n.arrow === 'right' && <svg width="7" height="12" viewBox="0 0 7 12" className="mr-[12px] shrink-0"><path d="M0 0l7 6-7 6z" fill="#9a9a9a" /></svg>}
              {n.text}
            </div>
          ))}
        </div>
        <div className="h-[19px] shrink-0 flex items-center pl-[2px] pt-[2px] text-[11px] text-[#c8c8c8]">
          <b className="font-bold">Click</b>&nbsp;to select nodes,&nbsp;<b className="font-bold">drag</b>&nbsp;to rearrange.
        </div>
        <div className="h-[4px] shrink-0 border-y border-[#1d1d1d] mx-[1px]" />
        <div className="h-[26px] shrink-0 flex items-stretch border-b border-[#484848] mx-[1px] font-bold text-[#707070]">
          <div className="w-[29px] flex items-center justify-center border-r border-[#484848]"><Ic n="plus" s={16} /></div>
          <div className="w-[119px] pl-[7px] pt-[4px] border-r border-[#484848]">Name</div>
          <div className="pl-[6px] pt-[4px]">Value</div>
        </div>
        {[['inkscape:label', 'board'], ['id', 'board'], ['inkscape:groupmode', 'layer']].map(([k, v]) => (
          <div key={k} className="h-[26px] shrink-0 flex items-center pt-[2px]">
            <div className="w-[33px] pl-[9px]"><Ic n="trash" s={15} /></div>
            <div className="w-[119px] pl-[2px]">{k}</div>
            <div className="pl-[2px]">{v}</div>
          </div>
        ))}
        <div className="flex-1" />
        <div className="h-[14px] shrink-0 flex items-center pl-[2px] text-[11px] text-[#c8c8c8] -mt-[1px] mb-[1px]"><b className="font-bold">Click</b>&nbsp;attribute to edit.</div>
        <div className="h-[28px] shrink-0 flex items-center pl-[1px] text-[11px] text-[#c8c8c8]">
          Show attributes
          <div className="ml-[8px] w-[38px] h-[22px] rounded-full bg-[#1f6ad0] border border-[#15315a] flex justify-end">
            <div className="w-[20px] h-[20px] rounded-full bg-[#3b3b3b] border border-[#232323]" />
          </div>
          <div className="ml-auto mr-[1px] h-[26px] w-[50px] flex border border-[#232323] rounded bg-[#262626]">
            <div className="w-[25px] flex items-center justify-center">
              <svg width="14" height="14" viewBox="0 0 14 14"><rect x="0.500" y="0.500" width="13" height="13" fill="none" stroke="#ddd" /><rect y="7" width="14" height="7" fill="#e8e8e8" /></svg>
            </div>
            <div className="w-[25px] bg-[#3a3a3a] flex items-center justify-center">
              <svg width="14" height="14" viewBox="0 0 14 14"><rect x="0.500" y="0.500" width="13" height="13" fill="none" stroke="#888" /><rect width="7" height="14" fill="#e8e8e8" /></svg>
            </div>
          </div>
        </div>
      </div>
      <svg width="13" height="19" viewBox="0 0 13 19" className="absolute left-[221px] top-[11px]">
        <path d="M1 1v15l4-4 3 6 2-1-3-6h5z" fill="#fff" stroke="#222" />
      </svg>
    </div>
  );
}

export default function App() {
  return (
    <div className="relative w-[1920px] h-[1017px] overflow-hidden bg-[#363636] flex flex-col font-['Roboto',sans-serif]">
      <svg width="0" height="0" className="absolute">
        <defs>
          <linearGradient id="g1" x1="0" y1="0" x2="1" y2="1"><stop offset="0" stopColor="#1b87d4" /><stop offset="1" stopColor="#c8e6f8" /></linearGradient>
          <radialGradient id="g2"><stop offset="0" stopColor="#39b7ff" /><stop offset="1" stopColor="#0b2a44" /></radialGradient>
        </defs>
      </svg>
      <div className="h-[25px] shrink-0 border-b border-[#2f2f2f] flex items-center pl-[8px] gap-[15px] text-[12px] text-[#9c9c9c]">
        {['File', 'Edit', 'View', 'Layer', 'Object', 'Path', 'Text', 'Filters', 'Extensions', 'Help'].map((m) => (
          <span key={m}>{m}</span>
        ))}
      </div>
      <TopToolbar />
      <div className="flex-1 flex min-h-0">
        <LeftTools />
        <CenterArea />
        <Handle />
        <RightPanel />
        <RightTools />
      </div>
      <Palette />
      <StatusBar />

      {/* annotation boxes drawn over the screenshot */}
      <div className="absolute left-[1389px] top-[130px] w-[478px] h-[175px] border-[5px] border-[#22b14c] z-20" />
      <XmlDialog />
      <div className="absolute left-[1430px] top-[617px] w-[349px] h-[66px] border-[5px] border-[#22b14c] z-20" />
    </div>
  );
}
